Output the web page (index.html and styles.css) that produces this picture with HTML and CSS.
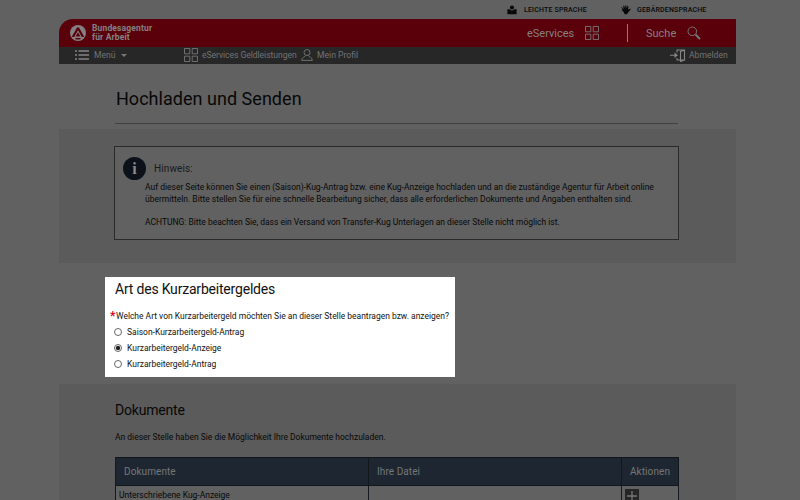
FILE: index.html
```
<!DOCTYPE html>
<html lang="de">
<head>
<meta charset="utf-8">
<title>Hochladen und Senden</title>
<link rel="stylesheet" href="styles.css">
</head>
<body>
<div class="page">
  <div class="topbar">
    <svg class="top-icon reader" viewBox="0 0 12 12"><circle cx="6" cy="3" r="2.5"/><path d="M.5 5 3 5 6 7l3-2h2.500v6H.5z"/></svg>
    <span class="top-link easy">LEICHTE SPRACHE</span>
    <svg class="top-icon hand" viewBox="0 0 12 12"><path d="M1 2.500 3 5 2.700 1h1.200L5 4.500 5.200.500h1.200L6.700 4 8 1l1 .500-.600 4L11 4.500l.5 1-2.500 3L7 11H4.500L3 8 .5 6l1-.6L2.500 6 .4 3z"/></svg>
    <span class="top-link sign">GEBÄRDENSPRACHE</span>
  </div>
  <header class="brandbar">
    <svg class="logo" viewBox="0 0 16 16"><circle cx="8" cy="8" r="8" fill="#858083"/><path d="M7 2.500h2L14.300 12h-2.500L8 5.300 4.200 12H1.700z" fill="#5a000b"/><path d="M8 7.300 10.400 11.500H5.600z" fill="#5a000b"/><path d="M5 13h6l-1 1.500H6z" fill="#5a000b"/></svg>
    <div class="brand">Bundesagentur<br>für Arbeit</div>
    <span class="services">eServices</span>
    <svg class="grid-icon red-grid" viewBox="0 0 14 14"><path d="M.5.500h5.300v5.300H.5zM8.200.500h5.300v5.300H8.200zM.5 8.200h5.300v5.300H.5zM8.200 8.200h5.300v5.300H8.200z"/></svg>
    <span class="divider"></span>
    <span class="search">Suche</span>
    <svg class="lens" viewBox="0 0 14 14"><circle cx="5.300" cy="5.300" r="4.300"/><path d="m8.500 8.500 4.500 4.500" stroke-width="1.800"/></svg>
  </header>
  <nav class="menubar">
    <svg class="list-icon" viewBox="0 0 14 10"><path d="M0 1h2M3.500 1H14M0 5h2M3.500 5H14M0 9h2M3.500 9H14"/></svg>
    <span class="menu">Menü</span>
    <span class="caret"></span>
    <svg class="grid-icon nav-grid" viewBox="0 0 14 14"><path d="M.5.500h5.300v5.300H.5zM8.200.500h5.300v5.300H8.200zM.5 8.200h5.300v5.300H.5zM8.200 8.200h5.300v5.300H8.200z"/></svg>
    <span class="money">eServices Geldleistungen</span>
    <svg class="person" viewBox="0 0 12 12"><circle cx="6" cy="3.500" r="3"/><path d="M4.500 6.500C4.500 8 .6 8 .6 11.400h10.800C11.400 8 7.500 8 7.500 6.500"/></svg>
    <span class="profile">Mein Profil</span>
    <svg class="exit" viewBox="0 0 16 13"><path d="M7 3.500V1h7.500v10H7V9M14.500 1l-4 1.500v10l4-1.500M0 6.300h7" /><path d="M4.500 3.500 8 6.300 4.500 9z" fill="#858585" stroke="none"/></svg>
    <span class="logout">Abmelden</span>
  </nav>
  <div class="title-area">
    <h1>Hochladen und Senden</h1>
  </div>
  <section class="band notice-band">
    <div class="notice">
      <div class="notice-head">
        <span class="info">i</span>
        <span class="notice-title">Hinweis:</span>
      </div>
      <p class="n1">Auf dieser Seite können Sie einen (Saison)-Kug-Antrag bzw. eine Kug-Anzeige hochladen und an die zuständige Agentur für Arbeit online</p>
      <p class="n2">übermitteln. Bitte stellen Sie für eine schnelle Bearbeitung sicher, dass alle erforderlichen Dokumente und Angaben enthalten sind.</p>
      <p class="n3">ACHTUNG: Bitte beachten Sie, dass ein Versand von Transfer-Kug Unterlagen an dieser Stelle nicht möglich ist.</p>
    </div>
  </section>
  <section class="choice">
    <h2>Art des Kurzarbeitergeldes</h2>
    <p class="question"><b>*</b><span>Welche Art von Kurzarbeitergeld möchten Sie an dieser Stelle beantragen bzw. anzeigen?</span></p>
    <div class="option"><i class="radio"></i><span>Saison-Kurzarbeitergeld-Antrag</span></div>
    <div class="option"><i class="radio checked"></i><span>Kurzarbeitergeld-Anzeige</span></div>
    <div class="option"><i class="radio"></i><span>Kurzarbeitergeld-Antrag</span></div>
  </section>
  <section class="band docs">
    <h2>Dokumente</h2>
    <p class="docs-text">An dieser Stelle haben Sie die Möglichkeit Ihre Dokumente hochzuladen.</p>
    <div class="table">
      <div class="th">Dokumente</div><div class="th">Ihre Datei</div><div class="th">Aktionen</div>
      <div class="td">Unterschriebene Kug-Anzeige</div><div class="td"></div>
      <div class="td"><svg class="plus" viewBox="0 0 14 14"><path d="M0 0h14v14H0z" fill="#262626"/><path d="M7 2v10M2 7h10" stroke="#777" stroke-width="1.300"/></svg></div>
    </div>
  </section>
</div>
</body>
</html>
```
FILE: styles.css
```
* { box-sizing: border-box; }
html, body { height: 500px; overflow: hidden; }
body { margin: 0; background: #616161; font-family: Roboto, "Liberation Sans", sans-serif; color: #080808; font-size: 8.47px; }
h1, h2, p { margin: 0; font-weight: 400; white-space: nowrap; }
svg { display: block; flex: none; }
span { white-space: nowrap; }
.page { width: 677px; margin-left: 59px; }
.topbar { height: 19px; display: flex; align-items: center; padding: 1px 0 0 448px; font-size: 7px; font-weight: 500; }
.top-icon { width: 10px; height: 10px; fill: #080808; }
.easy { width: 97px; margin-left: 7px; }
.sign { margin-left: 6px; }
.top-link { letter-spacing: .17px; }
.brandbar { height: 28px; background: #5a000b; border-top-left-radius: 14px; display: flex; align-items: center; padding-left: 11px; color: #858083; }
.logo { width: 16px; height: 16px; }
.brand { width: 435px; margin-left: 6px; font-size: 8.5px; line-height: 9px; font-weight: 700; letter-spacing: .15px; }
.services { width: 58px; font-size: 11px; }
.grid-icon { width: 14px; height: 14px; fill: none; stroke: #777; stroke-width: .9; }
.divider { width: 1px; height: 18px; background: #858083; margin-left: 28px; }
.search { width: 41px; margin-left: 18px; font-size: 11px; }
.lens { width: 14px; height: 14px; fill: none; stroke: #777; }
.menubar { height: 17px; background: #272727; color: #737373; display: flex; align-items: center; padding: 0 0 1px 16px; font-size: 8.6px; }
.list-icon { width: 14px; height: 10px; stroke: #858585; stroke-width: 1.3; }
.menu { width: 22px; margin-left: 5px; }
.caret { border: 3px solid transparent; border-top-color: #777; border-bottom: 0; margin-left: 5px; }
.nav-grid { margin-left: 57px; }
.money { width: 96px; margin-left: 4px; letter-spacing: -.06px; }
.person { width: 12px; height: 12px; margin-left: 3px; fill: none; stroke: #777; stroke-width: .9; }
.profile { width: 41px; margin-left: 4px; }
.exit { width: 16px; height: 13px; margin-left: 312px; fill: none; stroke: #858585; stroke-width: 1.1; }
.logout { margin-left: 3px; }
.title-area { height: 65px; padding: 23px 58px 0 56px; }
h1 { height: 37px; font-size: 18px; line-height: 24px; padding-left: 1px; letter-spacing: .03px; border-bottom: 1px solid #404040; }
.band { background: #5b5b5b; }
.notice-band { height: 134px; padding: 17px 57px 0 55px; }
.notice { height: 94px; border: 1px solid #2a2a2a; background: #616161; padding: 10px 0 0 8px; }
.notice-head { display: flex; align-items: center; height: 22px; }
.info { width: 23px; height: 23px; border-radius: 50%; background: #0d121a; color: #8a8a8a; font: 700 16px/23px "Liberation Serif", serif; text-align: center; }
.notice-title { margin-left: 8px; font-size: 10px; color: #1a1a1a; letter-spacing: .12px; }
.notice p { margin-left: 22px; line-height: 12px; }
.notice .n1 { margin-top: 2px; }
.notice .n3 { margin-top: 11px; }
.choice { width: 350px; height: 100px; margin: 14px 0 7px 46px; background: #fff; padding: 3px 0 0 5px; color: #111; }
.choice h2 { font-size: 14px; line-height: 18px; margin-left: 5px; height: 28px; letter-spacing: -.2px; }
.question { display: flex; height: 16px; line-height: 16px; }
.question b { width: 6px; color: #e2001a; font-size: 12px; }
.option { display: flex; align-items: center; height: 16px; padding-left: 4px; }
.radio { width: 8px; height: 8px; border: 1px solid #666; border-radius: 50%; margin-right: 5px; }
.radio.checked { background: radial-gradient(circle, #222 0 1.800px, #fff 2.600px); }
.docs { height: 116px; padding: 17px 57px 0 56px; }
.docs h2 { font-size: 14px; line-height: 18px; height: 29px; letter-spacing: -.2px; }
.docs-text { line-height: 14px; height: 27px; }
.table { display: grid; grid-template-columns: 253px 253px 57px; grid-template-rows: 29px 20px; border-left: 1px solid #151a20; }
.th { background: #1e2731; border: 1px solid #11171d; border-left: 0; color: #747678; padding-left: 8px; line-height: 27px; font-size: 10px; letter-spacing: .08px; }
.td { background: #616161; border-right: 1px solid #151a20; padding: 4px 0 0 3px; line-height: 11px; }
.plus { width: 14px; height: 14px; margin-top: -1px; }
```
